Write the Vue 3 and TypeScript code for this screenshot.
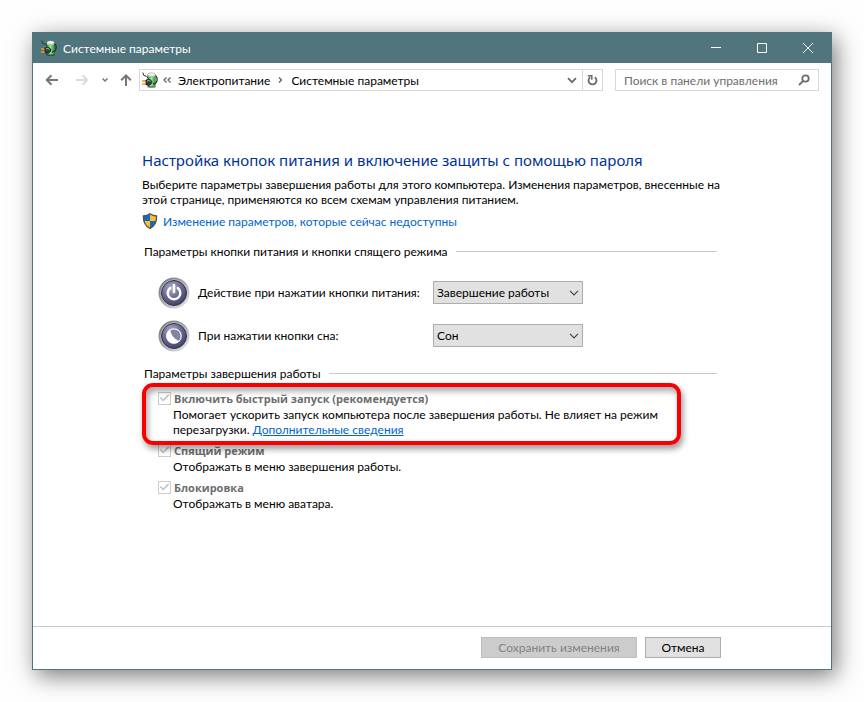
<script setup lang="ts">
import { ref } from 'vue'

interface ButtonAction {
  id: string
  icon: 'power' | 'sleep'
  label: string
  value: string
}

interface ShutdownOption {
  id: string
  title: string
  text: string
  link?: string
  marked?: boolean
}

const choices = ['Действие не требуется', 'Сон', 'Завершение работы']

const actions = ref<ButtonAction[]>([
  { id: 'power', icon: 'power', label: 'Действие при нажатии кнопки питания:', value: 'Завершение работы' },
  { id: 'sleep', icon: 'sleep', label: 'При нажатии кнопки сна:', value: 'Сон' },
])

const options: ShutdownOption[] = [
  {
    id: 'fast',
    title: 'Включить быстрый запуск (рекомендуется)',
    text: 'Помогает ускорить запуск компьютера после завершения работы. Не влияет на режим перезагрузки.',
    link: 'Дополнительные сведения',
    marked: true,
  },
  { id: 'suspend', title: 'Спящий режим', text: 'Отображать в меню завершения работы.' },
  { id: 'lock', title: 'Блокировка', text: 'Отображать в меню аватара.' },
]
</script>

<template>
  <div class="desktop">
    <svg class="defs" aria-hidden="true">
      <defs>
        <linearGradient id="cell" x1="0" x2="1" y1="0" y2="0">
          <stop offset="0" stop-color="#1f8a2c" />
          <stop offset="0.45" stop-color="#8df08a" />
          <stop offset="1" stop-color="#2f9a3c" />
        </linearGradient>
        <linearGradient id="rim" x1="0" x2="1" y1="0" y2="1">
          <stop offset="0" stop-color="#6f6f70" />
          <stop offset="0.5" stop-color="#a9a9ab" />
          <stop offset="1" stop-color="#f1f1f3" />
        </linearGradient>
        <radialGradient id="face" cx="0.4" cy="0.3" r="0.75">
          <stop offset="0" stop-color="#b0b0cc" />
          <stop offset="0.5" stop-color="#6c6c92" />
          <stop offset="1" stop-color="#3c3c60" />
        </radialGradient>
        <symbol id="battery" viewBox="0 0 16 16">
          <ellipse cx="9.5" cy="14.7" rx="4.5" ry="1" fill="#222" opacity="0.6" />
          <rect x="5.8" y="1.5" width="7.6" height="13.2" rx="2" fill="url(#cell)" stroke="#2b5a30" stroke-width="0.5" />
          <path d="M6 3h7.2v1.6c-2 1-5.2 1-7.2 0z" fill="#c9d3cc" />
          <ellipse cx="9.6" cy="2.5" rx="3.7" ry="1.7" fill="#f3f6f4" stroke="#888" stroke-width="0.5" />
          <path d="M11 12C15.6 12 16.2 6 13.6 3.8" fill="none" stroke="#303030" stroke-width="1.3" />
          <path d="M.8 .5L1.8 3.5L4.5 4.2L6 6" fill="none" stroke="#303030" stroke-width="1" />
          <path d="M0 9h4M0 12h4" stroke="#e3a51c" stroke-width="1.4" />
          <path d="M3.8 8C5.5 6.8 8.5 7 9.8 9.2C10.5 11 9.2 12.8 7 13.3L4 13z" fill="#383a3c" stroke="#111" stroke-width="0.5" />
          <path d="M5 9.2C6.2 8.3 7.6 8.4 8.6 9.4" fill="none" stroke="#b6bcc0" stroke-width="1" />
        </symbol>
      </defs>
    </svg>

    <main class="window">
      <header class="titlebar">
        <svg class="app-icon"><use href="#battery" /></svg>
        <span class="caption">Системные параметры</span>
        <button class="win-btn" type="button" aria-label="Свернуть">
          <svg viewBox="0 0 10 10"><path d="M0 4.5h10" /></svg>
        </button>
        <button class="win-btn" type="button" aria-label="Развернуть">
          <svg viewBox="0 0 10 10"><path d="M.5 .5h9v9h-9z" /></svg>
        </button>
        <button class="win-btn" type="button" aria-label="Закрыть">
          <svg viewBox="0 0 10 10"><path d="M0 0l10 10M10 0L0 10" /></svg>
        </button>
      </header>

      <nav class="navbar">
        <button class="nav-btn" type="button" aria-label="Назад">
          <svg viewBox="0 0 14 12" width="14" height="12"><path d="M13 6H2M6.5 1.2L1.7 6l4.8 4.8" /></svg>
        </button>
        <button class="nav-btn faded" type="button" aria-label="Вперёд" disabled>
          <svg viewBox="0 0 14 12" width="14" height="12"><path d="M1 6h11M7.5 1.2L12.3 6l-4.8 4.8" /></svg>
        </button>
        <button class="nav-btn narrow" type="button" aria-label="Последние расположения">
          <svg viewBox="0 0 6 6" width="6" height="6"><path d="M.5 1.5L3 4l2.5-2.5" /></svg>
        </button>
        <button class="nav-btn up" type="button" aria-label="Вверх">
          <svg viewBox="0 0 12 12" width="12" height="12"><path d="M6 12V1.7M1.2 6.2L6 1.4l4.8 4.8" /></svg>
        </button>
        <div class="address">
          <svg class="app-icon"><use href="#battery" /></svg>
          <svg class="crumb-mark" viewBox="0 0 8 6" width="8" height="6"><path d="M3.5 .5L1 3l2.5 2.5M7.5 .5L5 3l2.5 2.5" /></svg>
          <a class="crumb" href="#power">Электропитание</a>
          <svg class="crumb-mark" viewBox="0 0 5 6" width="5" height="6"><path d="M1 .5L3.5 3L1 5.5" /></svg>
          <a class="crumb" href="#system">Системные параметры</a>
          <button class="addr-btn drop" type="button" aria-label="Предыдущие расположения">
            <svg viewBox="0 0 10 7" width="10" height="7"><path d="M1 1.2L5 5.2l4-4" /></svg>
          </button>
          <button class="addr-btn refresh" type="button" aria-label="Обновить">
            <svg viewBox="0 0 11 12" width="11" height="12"><path d="M7.8 3.2A4 4 0 1 1 3.2 3.2" /><path class="thin" d="M.8 1.7H4.8V5.8" /></svg>
          </button>
        </div>
        <label class="search">
          <input type="search" placeholder="Поиск в панели управления" aria-label="Поиск в панели управления" />
          <svg viewBox="0 0 12 12" width="12" height="12"><circle cx="7.5" cy="4.5" r="3.2" /><path d="M5.2 6.8L1 11" /></svg>
        </label>
      </nav>

      <section class="content">
        <h1>Настройка кнопок питания и включение защиты с помощью пароля</h1>
        <p class="intro">
          Выберите параметры завершения работы для этого компьютера. Изменения параметров, внесенные на этой странице, применяются ко всем схемам управления питанием.
        </p>
        <a class="admin-link" href="#unlock">
          <svg viewBox="0 0 16 16" width="16" height="16">
            <path d="M8 .8C10 2.3 12.5 3 14.6 3C14.8 9 13 13 8 15.4C3 13 1.2 9 1.4 3C3.5 3 6 2.3 8 .8z" fill="#fbc02d" />
            <path d="M8 .8C6 2.3 3.5 3 1.4 3Q1.3 5.5 1.8 8H8zM8 8v7.4C11.6 13.7 13.5 11.2 14.2 8z" fill="#1769c4" />
            <path d="M8 .8C10 2.3 12.5 3 14.6 3C14.8 9 13 13 8 15.4C3 13 1.2 9 1.4 3C3.5 3 6 2.3 8 .8z" fill="none" stroke="#4b5257" stroke-width="1.3" />
          </svg>
          Изменение параметров, которые сейчас недоступны
        </a>

        <h2 class="group buttons-group">Параметры кнопки питания и кнопки спящего режима</h2>
        <div v-for="a in actions" :key="a.id" class="action">
          <svg class="round" viewBox="0 0 32 32">
            <circle cx="16" cy="16" r="15.5" fill="url(#rim)" />
            <circle cx="16" cy="16" r="13.4" fill="#d3d3d9" />
            <circle cx="16" cy="16" r="12.5" fill="url(#face)" stroke="#30304f" stroke-width="1" />
            <template v-if="a.icon === 'power'">
              <path d="M12.2 11A6.3 6.3 0 1 0 19.8 11" fill="none" stroke="#fff" stroke-width="2.5" stroke-linecap="round" />
              <path d="M16 8v7" stroke="#fff" stroke-width="2.6" stroke-linecap="round" />
            </template>
            <template v-else>
              <circle cx="16" cy="16" r="7.2" fill="#8585a2" stroke="#f2f2f8" stroke-width="1.2" />
              <path d="M12 9.6A7.5 7.5 0 1 0 21.3 21.2C16.5 19.5 13 15.3 12 9.6z" fill="#fff" />
            </template>
          </svg>
          <label :for="'sel-' + a.id">{{ a.label }}</label>
          <span class="combo">
            <select :id="'sel-' + a.id" v-model="a.value">
              <option v-for="c in choices" :key="c">{{ c }}</option>
            </select>
            <svg viewBox="0 0 10 6" width="10" height="6"><path d="M1 .8l4 4 4-4" /></svg>
          </span>
        </div>

        <h2 class="group shutdown-group">Параметры завершения работы</h2>
        <div class="options">
          <div v-for="o in options" :key="o.id" class="option" :class="{ marked: o.marked }">
            <div class="option-head">
              <input :id="'opt-' + o.id" type="checkbox" checked disabled />
              <label :for="'opt-' + o.id">{{ o.title }}</label>
            </div>
            <p>{{ o.text }} <a v-if="o.link" href="#more">{{ o.link }}</a></p>
          </div>
        </div>
      </section>

      <footer class="footer">
        <div class="footer-inner">
          <button class="push save" type="button" disabled>Сохранить изменения</button>
          <button class="push" type="button">Отмена</button>
        </div>
      </footer>
    </main>
  </div>
</template>

<style>
body {
  margin: 0;
  background: #fefefe;
}
</style>

<style scoped>
* {
  box-sizing: border-box;
}

.desktop {
  display: flex;
  min-height: 100vh;
  padding: 32px;
  font-family: Lato, 'Noto Sans', sans-serif;
  font-size: 12px;
  line-height: 15px;
  color: #000;
}

.defs {
  position: absolute;
  width: 0;
  height: 0;
}

button,
input,
select {
  font: inherit;
  border-radius: 0;
  margin: 0;
}

.window {
  display: flex;
  flex: 1;
  flex-direction: column;
  min-width: 0;
  border: 1px solid #50757d;
  background: #fff;
  box-shadow: 4px 6px 22px rgba(0, 0, 0, 0.52);
}

.titlebar {
  display: flex;
  align-items: center;
  height: 30px;
  padding-left: 8px;
  background: #50757d;
  color: #fff;
}

.app-icon {
  flex: none;
  width: 16px;
  height: 16px;
}

.caption {
  flex: 1;
  padding-left: 6px;
}

.win-btn {
  display: flex;
  align-items: center;
  justify-content: center;
  width: 46px;
  height: 30px;
  padding: 0;
  border: 0;
  background: none;
}

.win-btn svg {
  width: 10px;
  height: 10px;
  fill: none;
  stroke: #fff;
}

.navbar {
  display: flex;
  align-items: center;
  padding: 6px 12px 0 4px;
}

.nav-btn {
  display: flex;
  align-items: center;
  justify-content: center;
  width: 30px;
  height: 22px;
  padding: 0;
  border: 0;
  background: none;
}

.nav-btn svg {
  fill: none;
  stroke: #767676;
  stroke-width: 2;
}

.nav-btn.faded svg {
  stroke: #dcdcdc;
}

.nav-btn.narrow {
  width: 16px;
}

.nav-btn.narrow svg {
  stroke-width: 1.5;
}

.nav-btn.up {
  width: 26px;
}

.address {
  display: flex;
  flex: 1;
  align-items: center;
  height: 22px;
  padding-left: 2px;
  border: 1px solid #d9d9d9;
  white-space: nowrap;
}

.crumb-mark {
  margin: 0 7px 0 5px;
  fill: none;
  stroke: #606060;
  stroke-width: 1.3;
}

.crumb {
  color: #000;
  text-decoration: none;
}

.crumb + .crumb-mark {
  margin: 0 8px;
}

.addr-btn {
  display: flex;
  align-items: center;
  justify-content: center;
  width: 20px;
  height: 20px;
  padding: 0;
  border: 0;
  background: none;
}

.addr-btn svg {
  fill: none;
  stroke: #6b6b6b;
  stroke-width: 1.8;
}

.addr-btn .thin {
  stroke-width: 1.5;
}

.addr-btn.drop {
  margin-left: auto;
}

.addr-btn.refresh {
  border-left: 1px solid #d9d9d9;
}

.search {
  display: flex;
  align-items: center;
  width: 204px;
  height: 22px;
  margin-left: 12px;
  padding: 0 8px;
  border: 1px solid #d9d9d9;
}

.search input {
  flex: 1;
  min-width: 0;
  height: 20px;
  padding: 0;
  border: 0;
  outline: 0;
  background: none;
}

.search input::placeholder {
  color: #6d6d6d;
  opacity: 1;
}

.search svg {
  fill: none;
  stroke: #6b6b6b;
  stroke-width: 1.8;
}

.content {
  flex: 1;
  max-width: 704px;
  padding: 58px 15px 24px 109px;
}

h1 {
  margin: 0 0 6px;
  color: #003399;
  font-family: 'Noto Sans', sans-serif;
  font-size: 15px;
  font-weight: 400;
  line-height: 22px;
}

.intro {
  margin: 0;
}

.admin-link {
  display: flex;
  align-items: center;
  gap: 5px;
  height: 16px;
  margin-top: 6px;
  color: #0066cc;
  text-decoration: none;
}

.group {
  display: flex;
  align-items: center;
  gap: 8px;
  height: 16px;
  margin: 0;
  padding: 0 5px 0 2px;
  font-size: 12px;
  font-weight: 400;
  white-space: nowrap;
}

.group::after {
  flex: 1;
  height: 1px;
  background: #c9c9c9;
  content: '';
}

.buttons-group {
  margin: 14px 0 12px;
}

.shutdown-group {
  margin: 8px 0;
}

.action {
  display: grid;
  grid-template-columns: 32px 243px 150px;
  align-items: center;
  height: 43px;
  padding-left: 16px;
}

.action label {
  padding-left: 8px;
  white-space: nowrap;
}

.round {
  width: 32px;
  height: 32px;
}

.combo {
  position: relative;
  display: flex;
}

.combo select {
  width: 100%;
  height: 23px;
  padding: 0 20px 0 3px;
  border: 1px solid #adadad;
  background: #e1e1e1;
  color: #000;
  appearance: none;
}

.combo svg {
  position: absolute;
  top: 9px;
  right: 4px;
  fill: none;
  stroke: #444;
  stroke-width: 1.2;
  pointer-events: none;
}

.options {
  display: grid;
  gap: 4px;
  padding-left: 16px;
}

.option {
  position: relative;
}

.option-head {
  display: flex;
  align-items: center;
  gap: 3px;
  height: 18px;
  color: #6d6d6d;
  font-family: 'Open Sans', 'Noto Sans', sans-serif;
  font-size: 11px;
  font-weight: 700;
}

.option p {
  max-width: 516px;
  margin: 0;
  padding-left: 15px;
}

.option a {
  color: #0066cc;
}

.option input {
  width: 13px;
  height: 13px;
  border: 1px solid #cccccc;
  background: #fff;
  appearance: none;
}

.option input::before {
  display: block;
  width: 11px;
  height: 11px;
  background: #bdbdbd;
  clip-path: polygon(8% 50%, 18% 42%, 38% 64%, 84% 16%, 93% 25%, 38% 82%);
  content: '';
}

.marked::after {
  position: absolute;
  z-index: 1;
  inset: -6px 41px -8px -16px;
  border: 4px solid #f80000;
  border-radius: 11px;
  box-shadow: 2px 4px 6px rgba(0, 0, 0, 0.4), inset 2px 4px 6px rgba(0, 0, 0, 0.35);
  content: '';
  pointer-events: none;
}

.footer {
  border-top: 1px solid #c9c9c9;
}

.footer-inner {
  display: flex;
  justify-content: flex-end;
  gap: 8px;
  max-width: 688px;
  padding: 10px 0 11px;
}

.push {
  width: 76px;
  height: 21px;
  padding: 0;
  border: 1px solid #adadad;
  background: #e1e1e1;
  color: #000;
}

.push.save {
  width: 156px;
}

.push:disabled {
  border-color: #bfbfbf;
  background: #cccccc;
  color: #838383;
}
</style>
